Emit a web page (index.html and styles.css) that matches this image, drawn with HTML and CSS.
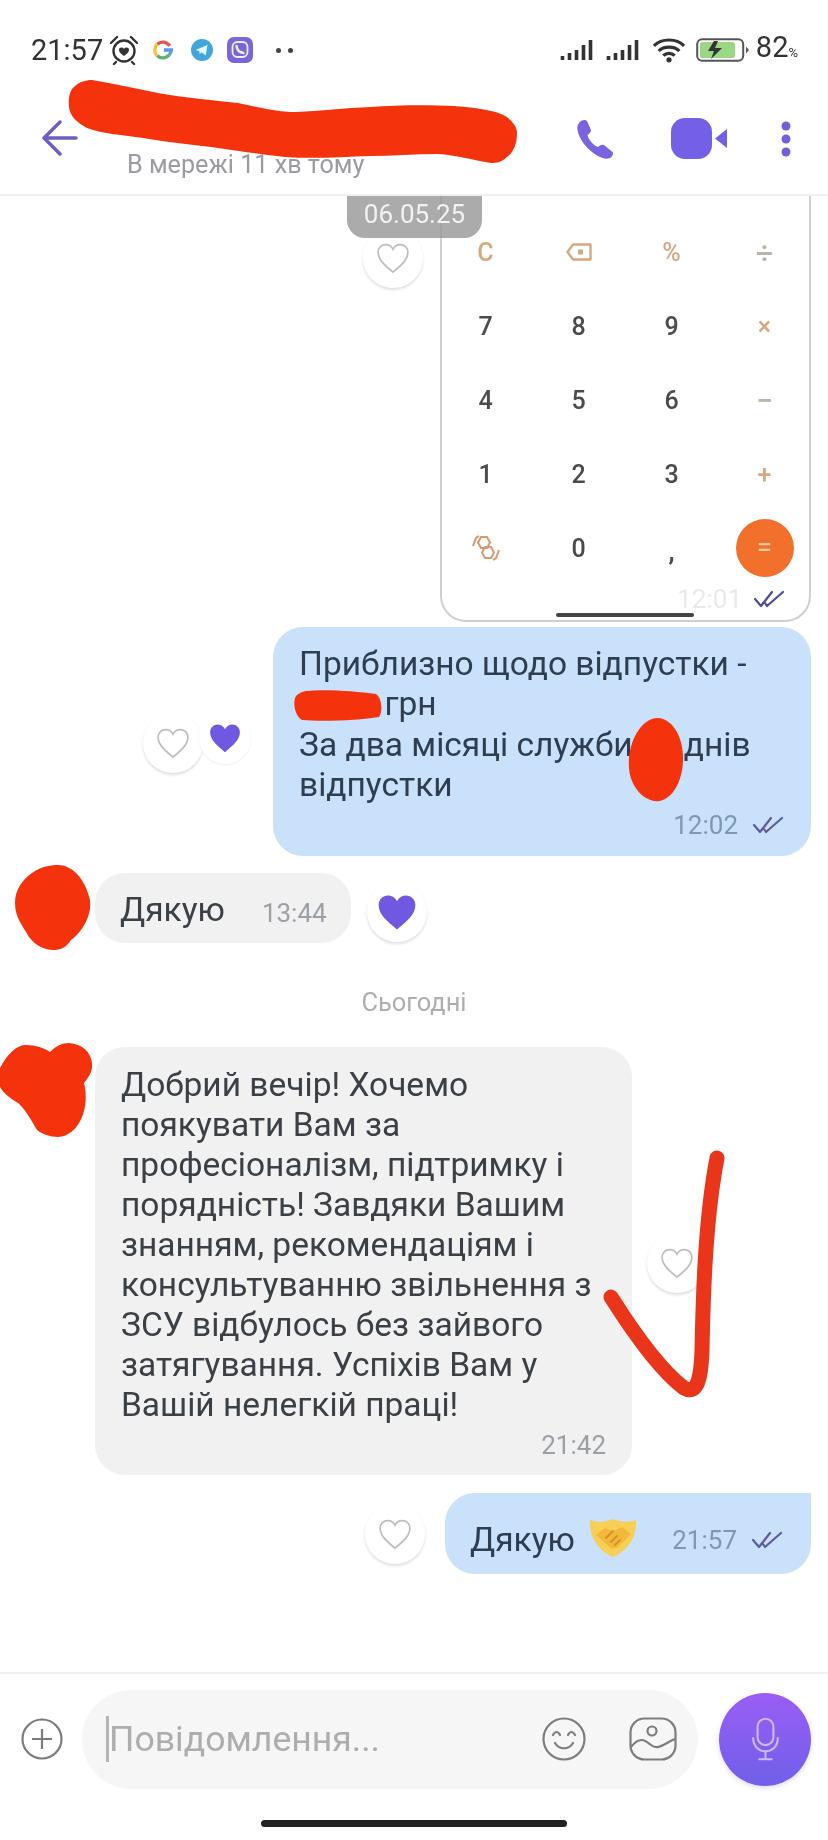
FILE: index.html
```html
<!DOCTYPE html>
<html lang="uk">
<head>
<meta charset="utf-8">
<title>Чат</title>
<link rel="stylesheet" href="styles.css">
</head>
<body>
<svg class="defs" width="0" height="0" aria-hidden="true">
  <defs>
    <symbol id="heart" viewBox="0 0 24 24"><path d="M12 22C6 17 1.500 13.200 1.500 8C1.500 4.700 4 2.500 6.800 2.500C9 2.500 11 3.700 12 5.800C13 3.700 15 2.500 17.200 2.500C20 2.500 22.500 4.700 22.500 8C22.500 13.200 18 17 12 22Z"/></symbol>
    <symbol id="ticks" viewBox="0 0 34 20"><path d="M2 10L8 17L19 3M12 14L14 17L30 3" fill="none" stroke="currentColor" stroke-width="2.200" stroke-linecap="round" stroke-linejoin="round"/></symbol>
  </defs>
</svg>
<main class="phone">
  <div class="status">
    <div class="status-left">
      <span class="clock">21:57</span>
      <svg class="st-alarm" viewBox="0 0 30 30"><circle cx="15" cy="16" r="10.500" fill="none" stroke="#333" stroke-width="2.400"/><path d="M2 8L8 2M28 8L22 2M7 27L5 29M23 27L25 29" stroke="#333" stroke-width="2.400" stroke-linecap="round"/><path d="M15 21C11 18 10 16.500 10 14.500C10 12.500 13.500 11.500 15 14C16.500 11.500 20 12.500 20 14.500C20 16.500 19 18 15 21Z" fill="#333"/></svg>
      <svg class="st-g" viewBox="0 0 24 24" fill="none" stroke-width="4"><path d="M20 7A10 10 0 0 0 5 5" stroke="#e8554a"/><path d="M5 5A10 10 0 0 0 5 19" stroke="#f3c13c"/><path d="M5 19A10 10 0 0 0 20 17" stroke="#5bb56b"/><path d="M20 17A10 10 0 0 0 22 12H13" stroke="#5a95ee"/></svg>
      <svg class="st-tg" viewBox="0 0 24 24"><circle cx="12" cy="12" r="12" fill="#3fa7dc"/><path d="M5 12L18 6.500L16 18L11.500 14.500L9.500 16.500L9 13Z" fill="#e8f5fb"/></svg>
      <svg class="st-vb" viewBox="0 0 26 26"><rect width="26" height="26" rx="7" fill="#7a66d8"/><rect x="5.500" y="5" width="15" height="15" rx="5" fill="none" stroke="#eee" stroke-width="1.800"/><path d="M9.500 9C10 13 12.500 15.500 16.500 16" fill="none" stroke="#eee" stroke-width="2.400" stroke-linecap="round"/></svg>
      <span class="st-more"><i></i><i></i></span>
    </div>
    <div class="status-right">
      <svg class="st-signal" viewBox="0 0 37 24"><path d="M2 18v4M9 15v7M16 12v10M23 7v15M30 2v20" stroke="#333" stroke-width="3.600"/></svg>
      <svg class="st-signal" viewBox="0 0 37 24"><path d="M2 18v4M9 15v7M16 12v10M23 7v15M30 2v20" stroke="#333" stroke-width="3.600"/></svg>
      <svg class="st-wifi" viewBox="0 0 32 26" fill="none" stroke="#333" stroke-width="3"><path d="M1.500 8.500C9 1 23 1 30.500 8.500M6 13.500C11 8.500 21 8.500 26 13.500M10.500 18C13.500 15 18.500 15 21.500 18"/><circle cx="16" cy="22" r="2.500" fill="#333" stroke="none"/></svg>
      <svg class="st-batt" viewBox="0 0 54 24"><rect x="1.200" y="1.200" width="46" height="21.600" rx="5" fill="#fff" stroke="#555" stroke-width="2"/><rect x="4" y="4" width="35" height="16" rx="2.500" fill="#9bd685"/><path d="M18 3L12 13H18L15 21L26 10H19L22 3Z" fill="#333"/><path d="M50 8.500L53 12L50 15.500Z" fill="#555"/></svg>
      <span class="batt-text">82<small>%</small></span>
    </div>
  </div>

  <header class="bar">
    <svg class="back" viewBox="0 0 36 36" fill="none" stroke="#6d5fc0" stroke-width="3.400" stroke-linecap="round" stroke-linejoin="round"><path d="M34 18H3M18 2L2 18L18 34"/></svg>
    <div class="peer">В мережі 11 хв тому</div>
    <div class="bar-actions">
      <svg class="ic-phone" viewBox="0 0 38 40"><path d="M3 4C5 1 9 0 11 2L15 11C15.500 13 13 15 11.500 16C12.500 21 17.500 26.500 22 28C23.500 26.500 26 25 28 26L36.500 33C38 35 36 38 34 39C30.500 40.500 26 39.500 21 36.500C11 30.500 3 20 1.500 11C1 8.500 1.500 6 3 4Z" fill="#7a63dc"/></svg>
      <svg class="ic-video" viewBox="0 0 56 41"><rect x="0" y="0" width="41" height="41" rx="14" fill="#7360e6"/><path d="M44 20.500L56 11V30Z" fill="#7360e6"/></svg>
      <svg class="ic-dots" viewBox="0 0 12 36"><circle cx="6" cy="5" r="4.500" fill="#7360d8"/><circle cx="6" cy="18" r="4.500" fill="#7360d8"/><circle cx="6" cy="31" r="4.500" fill="#7360d8"/></svg>
    </div>
  </header>

  <section class="thread">
    <div class="date-pill">06.05.25</div>

    <div class="row row-out row-calc">
      <button class="like like-top"><svg class="hrt"><use href="#heart"/></svg></button>
      <div class="shot">
        <div class="keys">
          <span class="op">C</span>
          <span class="op"><svg class="ic-del" viewBox="0 0 26 18"><path d="M7 1.500H24.500V16.500H7L1.500 9Z" fill="none" stroke="#d6a97e" stroke-width="2.400" stroke-linejoin="round"/><rect x="12" y="6.500" width="5" height="5" fill="#d6a97e"/></svg></span>
          <span class="op">%</span>
          <span class="op op-grey">÷</span>
          <span>7</span><span>8</span><span>9</span><span class="op">×</span>
          <span>4</span><span>5</span><span>6</span><span class="op op-grey">−</span>
          <span>1</span><span>2</span><span>3</span><span class="op">+</span>
          <span class="op"><svg class="ic-swap" viewBox="0 0 28 26" fill="none" stroke="#d69a6c" stroke-width="2"><path d="M9 2H15L18 7.500L15 13H9L6 7.500Z"/><path d="M13 12H19L22 17.500L19 23H13L10 17.500Z"/><path d="M1 11L4 3L7 1M27 15L24 23L21 25"/></svg></span>
          <span>0</span><span class="comma">,</span>
          <span><b class="equals">=</b></span>
        </div>
        <div class="meta meta-shot"><span class="time">12:01</span><svg class="tick tick-dark"><use href="#ticks"/></svg></div>
        <i class="shot-bar"></i>
      </div>
    </div>

    <div class="row row-out row-blue">
      <div class="likes-pair">
        <button class="like"><svg class="hrt"><use href="#heart"/></svg></button>
        <button class="like like-under"><svg class="hrt hrt-fill"><use href="#heart"/></svg></button>
      </div>
      <div class="bubble blue bubble-long">
        <p>Приблизно щодо відпустки -<br>&emsp;&emsp;&ensp;грн<br>За два місяці служби&emsp;&ensp;днів<br>відпустки</p>
        <div class="meta"><span class="time">12:02</span><svg class="tick"><use href="#ticks"/></svg></div>
      </div>
    </div>

    <div class="row row-in row-thanks">
      <div class="bubble grey bubble-inline"><span>Дякую</span><span class="time">13:44</span></div>
      <button class="like"><svg class="hrt hrt-fill hrt-big"><use href="#heart"/></svg></button>
    </div>

    <div class="day">Сьогодні</div>

    <div class="row row-in row-letter">
      <div class="bubble grey bubble-letter">
        <p>Добрий вечір! Хочемо<br>поякувати Вам за<br>професіоналізм, підтримку і<br>порядність! Завдяки Вашим<br>знанням, рекомендаціям і<br>консультуванню звільнення з<br>ЗСУ відбулось без зайвого<br>затягування. Успіхів Вам у<br>Вашій нелегкій праці!</p>
        <div class="meta"><span class="time">21:42</span></div>
      </div>
      <button class="like like-mid"><svg class="hrt"><use href="#heart"/></svg></button>
    </div>

    <div class="row row-out row-last">
      <button class="like"><svg class="hrt"><use href="#heart"/></svg></button>
      <div class="bubble blue bubble-inline bubble-end">
        <span>Дякую</span>
        <svg class="shake" viewBox="0 0 52 40"><path d="M3 2C12 5 18 4 26 1C34 4 40 5 49 2C50 18 42 32 26 39C10 32 2 18 3 2Z" fill="#f8cf55"/><path d="M9 17L18 10L26 13L35 9L44 16L30 30L24 30Z" fill="#f2b83a"/><path d="M19 20L26 13M24 24L30 18M28 27L33 22" stroke="#d2912a" stroke-width="1.800" stroke-linecap="round"/></svg>
        <span class="time">21:57</span><svg class="tick"><use href="#ticks"/></svg>
      </div>
    </div>
  </section>

  <footer class="composer">
    <svg class="ic-plus" viewBox="0 0 42 42" fill="none" stroke="#7b7b7b" stroke-width="2.200"><circle cx="21" cy="21" r="19.500"/><path d="M21 11V31M11 21H31"/></svg>
    <div class="field">
      <i class="caret"></i>
      <span class="placeholder">Повідомлення...</span>
      <svg class="ic-smile" viewBox="0 0 44 44" fill="none" stroke="#7d7d7d" stroke-width="2.200" stroke-linecap="round"><circle cx="22" cy="22" r="20.500"/><path d="M11 18C13 14 16 14 18 18M26 18C28 14 31 14 33 18M13 26C17 33 27 33 31 26"/></svg>
      <svg class="ic-gallery" viewBox="0 0 48 44" fill="none" stroke="#7d7d7d" stroke-width="2.200"><rect x="1.500" y="1.500" width="45" height="41" rx="14"/><circle cx="23" cy="14" r="4.500"/><path d="M2 30C10 20 15 22 22 28C29 34 36 26 46 22"/></svg>
    </div>
    <button class="mic"><svg viewBox="0 0 32 50" fill="none" stroke="#cdb6fa" stroke-width="2.400" stroke-linecap="round"><rect x="7" y="2" width="18" height="30" rx="9"/><path d="M2 24C2 44 30 44 30 24M16 39V48M9 48H23"/></svg></button>
  </footer>
  <div class="home"><i></i></div>

  <svg class="marks" viewBox="0 0 828 1840" aria-hidden="true">
    <path d="M92 80C115 84 135 88 158 93C185 98 212 100 238 103C258 107 276 112 296 112C320 111 345 108 370 107C398 105 428 105 454 106C478 108 495 110 507 117C513 122 517 127 517 133C517 143 514 152 507 157C502 162 497 163 491 163C472 160 456 155 438 154C415 154 392 156 370 156C342 157 313 159 285 157C260 154 236 151 211 147C188 144 166 142 143 138C123 135 103 134 87 128C76 122 70 116 69 107C68 98 70 90 74 87C79 82 85 80 92 80Z"/>
    <path d="M58 865C72 865 85 878 90 900C92 916 82 932 71 940C66 948 60 950 53 950C44 950 35 945 29 937C23 926 15 918 15 903C15 890 22 880 32 873C40 867 50 865 58 865Z"/>
    <path d="M0 1068C8 1053 17 1045 26 1045C36 1045 44 1048 50 1052C56 1046 62 1043 69 1043C82 1044 91 1052 92 1063C93 1072 88 1078 84 1083C87 1095 86 1108 82 1117C78 1128 68 1137 58 1137C50 1137 42 1134 37 1130C31 1120 26 1110 18 1103C10 1098 4 1094 0 1087Z"/>
    <path d="M306 691C325 689 355 691 376 694C382 698 383 712 379 717C360 720 325 722 302 720C295 716 293 704 295 698C297 694 301 692 306 691Z"/>
    <path d="M658 718C672 719 682 735 683 755C684 775 676 797 660 801C644 803 630 786 629 768C627 745 640 718 658 718Z"/>
    <path class="check" d="M611 1297C635 1335 660 1370 684 1388C696 1395 701 1382 702 1350C703 1300 705 1220 717 1158"/>
  </svg>
</main>
</body>
</html>
```

FILE: styles.css
```css
* { box-sizing: border-box; }
html, body { margin: 0; padding: 0; background: #fff; }
body { width: 828px; height: 1840px; overflow: hidden; font-family: Roboto, "Noto Sans", sans-serif; color: #3b3f44; }
.defs { position: absolute; }
p { margin: 0; }
button { border: 0; padding: 0; background: none; font: inherit; }

.phone { position: relative; width: 828px; height: 1840px; display: flex; flex-direction: column; overflow: hidden; background: #fff; filter: blur(0.7px); }

/* status bar */
.status { height: 100px; flex: none; display: flex; align-items: center; justify-content: space-between; padding: 0 30px 0 31px; }
.status-left, .status-right { display: flex; align-items: center; }
.clock { font-size: 29px; line-height: 30px; color: #333; }
.st-alarm { width: 30px; height: 30px; margin-left: 6px; }
.st-g { width: 20px; height: 22px; margin-left: 14px; }
.st-tg { width: 22px; height: 22px; margin-left: 18px; }
.st-vb { width: 26px; height: 26px; margin-left: 14px; }
.st-more { display: flex; gap: 7px; margin-left: 23px; }
.st-more i { width: 5px; height: 5px; border-radius: 50%; background: #444; }
.st-signal { width: 38px; height: 24px; margin-right: 8px; }
.st-wifi { width: 34px; height: 27px; }
.st-batt { width: 54px; height: 24px; margin-left: 10px; }
.batt-text { font-size: 29px; line-height: 30px; margin-left: 6px; color: #333; }
.batt-text small { font-size: 13px; }

/* header */
.bar { height: 96px; flex: none; display: flex; align-items: flex-start; padding: 18px 36px 0 42px; border-bottom: 2px solid #efefef; }
.back { width: 36px; height: 36px; margin-top: 2px; }
.peer { margin: 33px 0 0 49px; font-size: 25.200px; line-height: 28px; color: #9b9ba3; }
.bar-actions { margin-left: auto; display: flex; align-items: center; }
.ic-phone { width: 38px; height: 40px; }
.ic-video { width: 56px; height: 41px; margin-left: 57px; }
.ic-dots { width: 12px; height: 36px; margin-left: 53px; }

/* thread */
.thread { position: relative; flex: 1; min-height: 0; display: flex; flex-direction: column; overflow: hidden; }
.date-pill { position: absolute; top: 0; left: 347px; width: 135px; height: 42px; border-radius: 0 0 18px 18px; background: rgba(150,150,150,.8); color: #f2f2f2; font-size: 26px; line-height: 36px; text-align: center; z-index: 2; }
.row { display: flex; flex: none; }
.row-out { justify-content: flex-end; padding-right: 17px; }
.row-in { padding-left: 95px; }
.like { width: 60px; height: 60px; flex: none; border-radius: 50%; background: #fff; box-shadow: 0 2px 3px rgba(0,0,0,.13); display: flex; align-items: center; justify-content: center; }
.hrt { width: 34px; height: 34px; fill: #fff; stroke: #bdbdbd; stroke-width: 1.200; }
.hrt-fill { fill: #7059e0; stroke: none; }
.hrt-big { width: 42px; height: 42px; }

/* screenshot message */
.row-calc { height: 426px; gap: 17px; }
.like-top { margin-top: 32px; }
.shot { position: relative; width: 371px; height: 426px; border: 2px solid #cfcfcf; border-top: 0; border-radius: 0 0 26px 26px; }
.keys { display: grid; grid-template-columns: repeat(4, 93px); grid-auto-rows: 74px; margin-left: -3px; padding-top: 19px; font-size: 25px; font-weight: 500; color: #4b4b4b; }
.keys span { display: flex; align-items: center; justify-content: center; }
.op { color: #d6a97e; font-size: 25px; }
.op-grey { color: #b9b5a8; font-size: 30px; }
.ic-del { width: 26px; height: 18px; }
.ic-swap { width: 28px; height: 26px; }
.comma { font-weight: 700; padding-top: 6px; }
.equals { width: 58px; height: 58px; border-radius: 50%; background: #f2702b; color: #f8c9a0; font-weight: 400; font-size: 28px; line-height: 56px; text-align: center; }
.meta { display: flex; align-items: center; justify-content: flex-end; gap: 14px; }
.meta-shot { padding: 0 22px 0 0; margin-top: -1px; gap: 11px; }
.meta-shot .time { color: #e9e9e9; }
.shot-bar { position: absolute; left: 114px; bottom: 3px; width: 138px; height: 4px; background: #444; border-radius: 2px; }
.time { font-size: 26px; line-height: 30px; color: #9aa0a6; white-space: nowrap; }
.tick { width: 34px; height: 20px; color: #5e5aa0; flex: none; }
.tick-dark { color: #4f4a9a; }

/* bubbles */
.bubble { font-size: 33.500px; line-height: 40.300px; color: #3b4046; }
.blue { background: #c9e1fa; color: #2e3e50; }
.grey { background: #f1f1f1; }
.row-blue { margin-top: 5px; }
.bubble-long { width: 538px; height: 229px; border-radius: 30px; padding: 17px 25px 0 26px; }
.bubble-long .meta { margin-top: 5px; }
.bubble-long .time { color: #7f98b0; }
.likes-pair { display: flex; align-items: flex-start; padding: 86px 22px 0 0; }
.likes-pair .like-under { margin-left: -4px; width: 52px; height: 52px; box-shadow: 0 1px 2px rgba(0,0,0,.07); margin-top: -1px; }
.row-thanks { margin-top: 17px; gap: 16px; align-items: flex-end; height: 70px; }
.bubble-inline { display: flex; align-items: center; height: 70px; border-radius: 30px; padding: 5px 24px 0 25px; }
.bubble-inline .time { margin-left: 37px; padding-top: 5px; }
.row-thanks .like { margin-bottom: 1px; }
.day { flex: none; margin-top: 44px; height: 60px; text-align: center; font-size: 25.400px; line-height: 30px; color: #aeaeae; }
.row-letter { gap: 15px; }
.bubble-letter { width: 537px; height: 428px; border-radius: 30px; padding: 18px 26px 0 26px; line-height: 40px; }
.bubble-letter .meta { margin-top: 5px; }
.like-mid { margin-top: 186px; }
.row-last { margin-top: 18px; gap: 20px; align-items: center; }
.bubble-end { width: 366px; height: 81px; border-radius: 30px 0 30px 30px; color: #2e3e50; padding: 13px 26px 0 25px; }
.bubble-end .time { margin-left: auto; margin-right: 14px; padding-top: 0; color: #7f98b0; }
.shake { width: 52px; height: 40px; margin-left: 12px; margin-top: -4px; }

/* composer */
.composer { flex: none; height: 132px; border-top: 2px solid #f0f0f0; display: flex; align-items: center; padding: 0 17px 0 21px; }
.ic-plus { width: 42px; height: 42px; flex: none; }
.field { width: 616px; height: 99px; margin-left: 19px; border-radius: 50px; background: #f6f6f6; display: flex; align-items: center; padding: 0 21px 0 24px; }
.caret { width: 3px; height: 46px; background: #b5b5b5; flex: none; }
.placeholder { flex: 1; font-size: 35.600px; color: #adadad; white-space: nowrap; }
.ic-smile { width: 44px; height: 44px; }
.ic-gallery { width: 48px; height: 44px; margin-left: 43px; }
.mic { width: 92px; height: 93px; margin-left: 21px; flex: none; border-radius: 50%; background: linear-gradient(180deg, #9a5df6, #6f60e8); box-shadow: 0 2px 5px rgba(150,110,250,.25); display: flex; align-items: center; justify-content: center; }
.mic svg { width: 29px; height: 44px; }
.home { flex: none; height: 36px; display: flex; justify-content: center; padding-top: 16px; }
.home i { width: 306px; height: 7px; border-radius: 4px; background: #222; }

/* red marker drawn over the screenshot */
.marks { position: absolute; inset: 0; width: 828px; height: 1840px; pointer-events: none; fill: #f4330d; z-index: 5; }
.marks .check { fill: none; stroke: #e9351a; stroke-width: 15; stroke-linecap: round; stroke-linejoin: round; }
```
